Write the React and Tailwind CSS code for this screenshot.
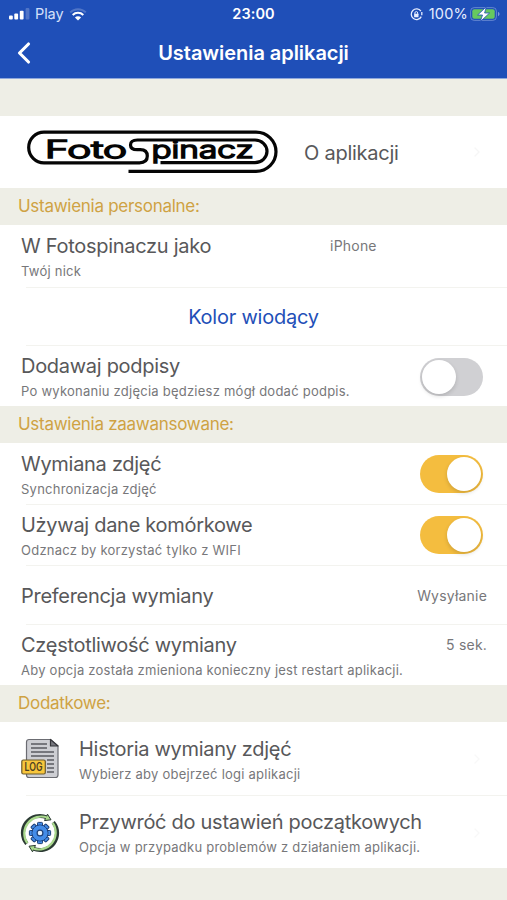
import React, { useState } from 'react';
import { ChevronLeft, ChevronRight } from 'lucide-react';

function StatusBar() {
  return (
    <div className="relative flex h-7 items-center justify-between pl-[9px] pr-[7px] text-white">
      <div className="flex items-center">
        <svg width="22" height="12" viewBox="0 0 22 12" fill="#fff">
          <rect x="0" y="7.5" width="3.8" height="4" rx="1" />
          <rect x="5.3" y="5.5" width="3.8" height="6" rx="1" />
          <rect x="10.8" y="2.8" width="3.8" height="8.7" rx="1" />
          <rect x="16.6" y="0" width="3.8" height="11.5" rx="1" opacity="0.22" />
        </svg>
        <span className="ml-[4px] text-[14.5px] tracking-[-0.1px] text-[#d5e0fa]">Play</span>
        <svg className="ml-[6px]" width="18" height="13" viewBox="0 0 18 13" fill="none" strokeWidth="2">
          <path d="M1.2 4.4a11 11 0 0 1 15.6 0" stroke="#fff" strokeOpacity="0.22" />
          <path d="M3.7 7a7.5 7.5 0 0 1 10.6 0" stroke="#fff" />
          <path d="M9 12.6 5.9 9.5a4.4 4.4 0 0 1 6.2 0Z" fill="#fff" />
        </svg>
      </div>
      <span className="absolute left-1/2 -translate-x-1/2 text-[14.5px] font-semibold tracking-[0.1px]">23:00</span>
      <div className="flex items-center">
        <svg width="13" height="13" viewBox="0 0 13 13" fill="none" stroke="#e6edff" strokeWidth="1.3">
          <path d="M10.9 3.2a5.3 5.3 0 1 0 .4 5.4" />
          <path d="M11.8 7.2V4" />
          <rect x="4.1" y="5.8" width="4.4" height="3.4" rx="0.5" fill="#e6edff" stroke="none" />
          <path d="M4.9 6.2V5a1.4 1.4 0 0 1 2.8 0v1.2" strokeWidth="1" />
        </svg>
        <span className="ml-[6px] text-[14.5px] tracking-[0.2px] text-[#e6edff]">100%</span>
        <svg className="ml-[2px]" width="30" height="16" viewBox="0 0 30 16">
          <rect x="0.6" y="1.6" width="25.8" height="12.8" rx="3.6" fill="none" stroke="#7f9bda" strokeOpacity="0.7" />
          <rect x="2.3" y="3.3" width="22.4" height="9.4" rx="2" fill="#67c95f" />
          <path d="M28 6v4.2c1-.4 1.5-1.2 1.5-2.1S29 6.4 28 6Z" fill="#7f9bda" />
          <path d="M16.3.8 7.6 9h4.9l-2.2 6.6L19.6 7h-5Z" fill="#fff" stroke="#1f4fb8" strokeWidth="0.8" />
        </svg>
      </div>
    </div>
  );
}

function Logo() {
  return (
    <svg width="253" height="46" viewBox="0 0 253 46" fill="none" stroke="#050505" strokeWidth="3.2">
      {/* Drut spinacza */}
      <path d="M102.5 42.4H230a20 19.6 0 0 0 0-39.2H18a15.3 15.3 0 0 0 0 30.6H113.500c5.200 0 7.800-2.300 7.800-6.700s-2.500-6.500-7-6.500h-3c-4.500 0-6.800-1.300-6.800-4.700s2.500-4.900 7-4.900H229a12 11.300 0 0 1 0 22.600H134.500" />
      <g fill="#050505" strokeWidth="1.5" fontFamily="Inter, sans-serif" fontWeight="300" fontSize="23.5">
        <text x="19" y="28.500" textLength="82" lengthAdjust="spacingAndGlyphs">Foto</text>
        <text x="125.500" y="28.500" textLength="102" lengthAdjust="spacingAndGlyphs">pinacz</text>
      </g>
    </svg>
  );
}

function LogIcon() {
  return (
    <svg width="40" height="42" viewBox="0 0 40 42">
      <path d="M9 1.5h21.500l7.500 6.500v29a2.500 2.500 0 0 1-2.500 2.500H9A2.500 2.500 0 0 1 6.500 37V4A2.500 2.500 0 0 1 9 1.500Z" fill="#cdced3" stroke="#6b6c72" strokeWidth="1.2" />
      <path d="M30.5 1.5V8H38Z" fill="#77787f" stroke="#35363b" strokeWidth="1.2" strokeLinejoin="round" />
      <path d="M11 6h16M11 10h16M11 14h23M11 18h23M27 22h7M27 26h7M27 30h7M27 34h7" stroke="#5a5b62" strokeWidth="1.3" />
      <rect x="1.8" y="22" width="23.500" height="14" rx="1.500" fill="#f8c63c" stroke="#6b5a2c" strokeWidth="1.2" />
      <text x="4.500" y="33" fill="#4d4020" fontFamily="Inter, sans-serif" fontWeight="600" fontSize="11.500" textLength="18" lengthAdjust="spacingAndGlyphs">LOG</text>
    </svg>
  );
}

const ZEBY = [0, 45, 90, 135, 180, 225, 270, 315];

function ResetIcon() {
  return (
    <svg width="40" height="40" viewBox="0 0 40 40">
      {/* Strzałki */}
      <g fill="none" stroke="#2b3a33" strokeWidth="4">
        <path d="M6.8 30.8A17 17 0 0 1 27 4.5" />
        <path d="M33.2 9.2A17 17 0 0 1 13 35.5" />
      </g>
      <g fill="#a9d88d" stroke="#2b3a33" strokeWidth="1" strokeLinejoin="round">
        <path d="M27.5 1.2 31 6.8 24.5 7.6Z" />
        <path d="M12.5 38.8 9 33.2 15.5 32.4Z" />
      </g>
      <g fill="none" stroke="#a9d88d" strokeWidth="2.2">
        <path d="M7.3 30.2A17 17 0 0 1 27.5 4.7" />
        <path d="M32.7 9.8A17 17 0 0 1 12.5 35.3" />
      </g>
      <g fill="#438ce8" stroke="#1d3f77" strokeWidth="1">
        {ZEBY.map((kat) => (
          <rect key={kat} x="17.5" y="9.4" width="5" height="6" rx="0.8" transform={`rotate(${kat} 20 20)`} />
        ))}
        <circle cx="20" cy="20" r="8" />
      </g>
      <circle cx="20" cy="20" r="7.5" fill="#438ce8" />
      <circle cx="20" cy="20" r="2.9" fill="#e9f3fd" stroke="#1d3f77" strokeWidth="1.2" />
    </svg>
  );
}

function Section({ children }) {
  return (
    <div className="flex h-[37px] items-center bg-[#eeeee6] pl-[18px] text-[17px] tracking-[-0.28px] text-[#cfa243]">
      {children}
    </div>
  );
}

function Toggle({ checked, onChange }) {
  return (
    <button
      role="switch"
      aria-checked={checked}
      onClick={onChange}
      className={`flex h-[38px] w-[63px] shrink-0 items-center rounded-full px-[2px] ${checked ? 'justify-end bg-[#f4bd3f]' : 'justify-start bg-[#d0d0d3]'}`}
    >
      <span className="size-[34px] rounded-full bg-white shadow-[0_2px_4px_rgba(0,0,0,0.15)]"></span>
    </button>
  );
}

function Label({ title, subtitle }) {
  return (
    <div className="flex flex-col whitespace-nowrap">
      <span className="text-[20px] leading-[26px] tracking-[-0.29px] text-[#58585a]">{title}</span>
      {subtitle && <span className="mt-[3px] text-[13px] leading-[18px] tracking-[0.24px] text-[#77777a]">{subtitle}</span>}
    </div>
  );
}

function Line() {
  return <div className="ml-[26px] h-px bg-[#f3f3ef]"></div>;
}

function App() {
  const [podpisy, setPodpisy] = useState(false);
  const [wymiana, setWymiana] = useState(true);
  const [komorkowe, setKomorkowe] = useState(true);

  return (
    <div className="flex h-[900px] w-full flex-col overflow-hidden bg-[#eeeee6] font-['Inter',sans-serif]">
      {/* Nagłówek */}
      <header className="h-[79px] shrink-0 border-b border-[#8fa8dc] bg-[#1f4fb8]">
        <StatusBar />
        <div className="grid h-[49px] grid-cols-[60px_1fr_60px] items-center text-white">
          <ChevronLeft size={36} strokeWidth={2.1} className="ml-[6px]" />
          <h1 className="text-center text-[20px] font-semibold tracking-[-0.05px]">Ustawienia aplikacji</h1>
        </div>
      </header>

      <main className="mt-[37px] bg-white">
        <div className="flex h-[72px] items-center pl-[26px] pr-[22px]">
          <Logo />
          <span className="ml-[25px] mt-[2px] text-[20px] tracking-[-0.25px] text-[#58585a]">O aplikacji</span>
          <ChevronRight size={16} className="ml-auto text-[#f6f6f6]" />
        </div>

        <Section>Ustawienia personalne:</Section>
        <div className="flex h-[62px] items-start pl-[21px] pt-[8px]">
          <Label title="W Fotospinaczu jako" subtitle="Twój nick" />
          <span className="ml-[119px] mt-[2px] text-[14px] tracking-[0.2px] text-[#77777a]">iPhone</span>
        </div>
        <Line />
        <button className="flex h-[57px] w-full items-center justify-center text-[20px] tracking-[-0.22px] text-[#1f50b8]">Kolor wiodący</button>
        <Line />
        <div className="flex h-[60px] items-center justify-between pl-[21px] pr-[24px] pt-px">
          <Label title="Dodawaj podpisy" subtitle="Po wykonaniu zdjęcia będziesz mógł dodać podpis." />
          <Toggle checked={podpisy} onChange={() => setPodpisy(!podpisy)} />
        </div>

        <Section>Ustawienia zaawansowane:</Section>
        <div className="flex h-[61px] items-center justify-between pl-[21px] pr-[24px] pt-px">
          <Label title="Wymiana zdjęć" subtitle="Synchronizacja zdjęć" />
          <Toggle checked={wymiana} onChange={() => setWymiana(!wymiana)} />
        </div>
        <Line />
        <div className="flex h-[60px] items-center justify-between pl-[21px] pr-[24px]">
          <Label title="Używaj dane komórkowe" subtitle="Odznacz by korzystać tylko z WIFI" />
          <Toggle checked={komorkowe} onChange={() => setKomorkowe(!komorkowe)} />
        </div>
        <Line />
        <div className="flex h-[58px] items-center justify-between pl-[21px] pr-[20px] pt-px">
          <Label title="Preferencja wymiany" />
          <span className="text-[14px] tracking-[0.2px] text-[#77777a]">Wysyłanie</span>
        </div>
        <Line />
        <div className="flex h-[60px] items-start justify-between pl-[21px] pr-[20px] pt-[7px]">
          <Label title="Częstotliwość wymiany" subtitle="Aby opcja została zmieniona konieczny jest restart aplikacji." />
          <span className="mt-[2px] text-[14px] tracking-[0.2px] text-[#77777a]">5 sek.</span>
        </div>

        <Section>Dodatkowe:</Section>
        <div className="flex h-[73px] items-center pl-[20px] pr-[22px] pt-px">
          <LogIcon />
          <div className="ml-[19px]">
            <Label title="Historia wymiany zdjęć" subtitle="Wybierz aby obejrzeć logi aplikacji" />
          </div>
          <ChevronRight size={16} className="ml-auto text-[#f8f8f8]" />
        </div>
        <Line />
        <div className="flex h-[72px] items-center pl-[20px] pr-[22px] pt-px">
          <ResetIcon />
          <div className="ml-[19px]">
            <Label title="Przywróć do ustawień początkowych" subtitle="Opcja w przypadku problemów z działaniem aplikacji." />
          </div>
          <ChevronRight size={16} className="ml-auto text-[#f8f8f8]" />
        </div>
      </main>
    </div>
  );
}

export default App;
